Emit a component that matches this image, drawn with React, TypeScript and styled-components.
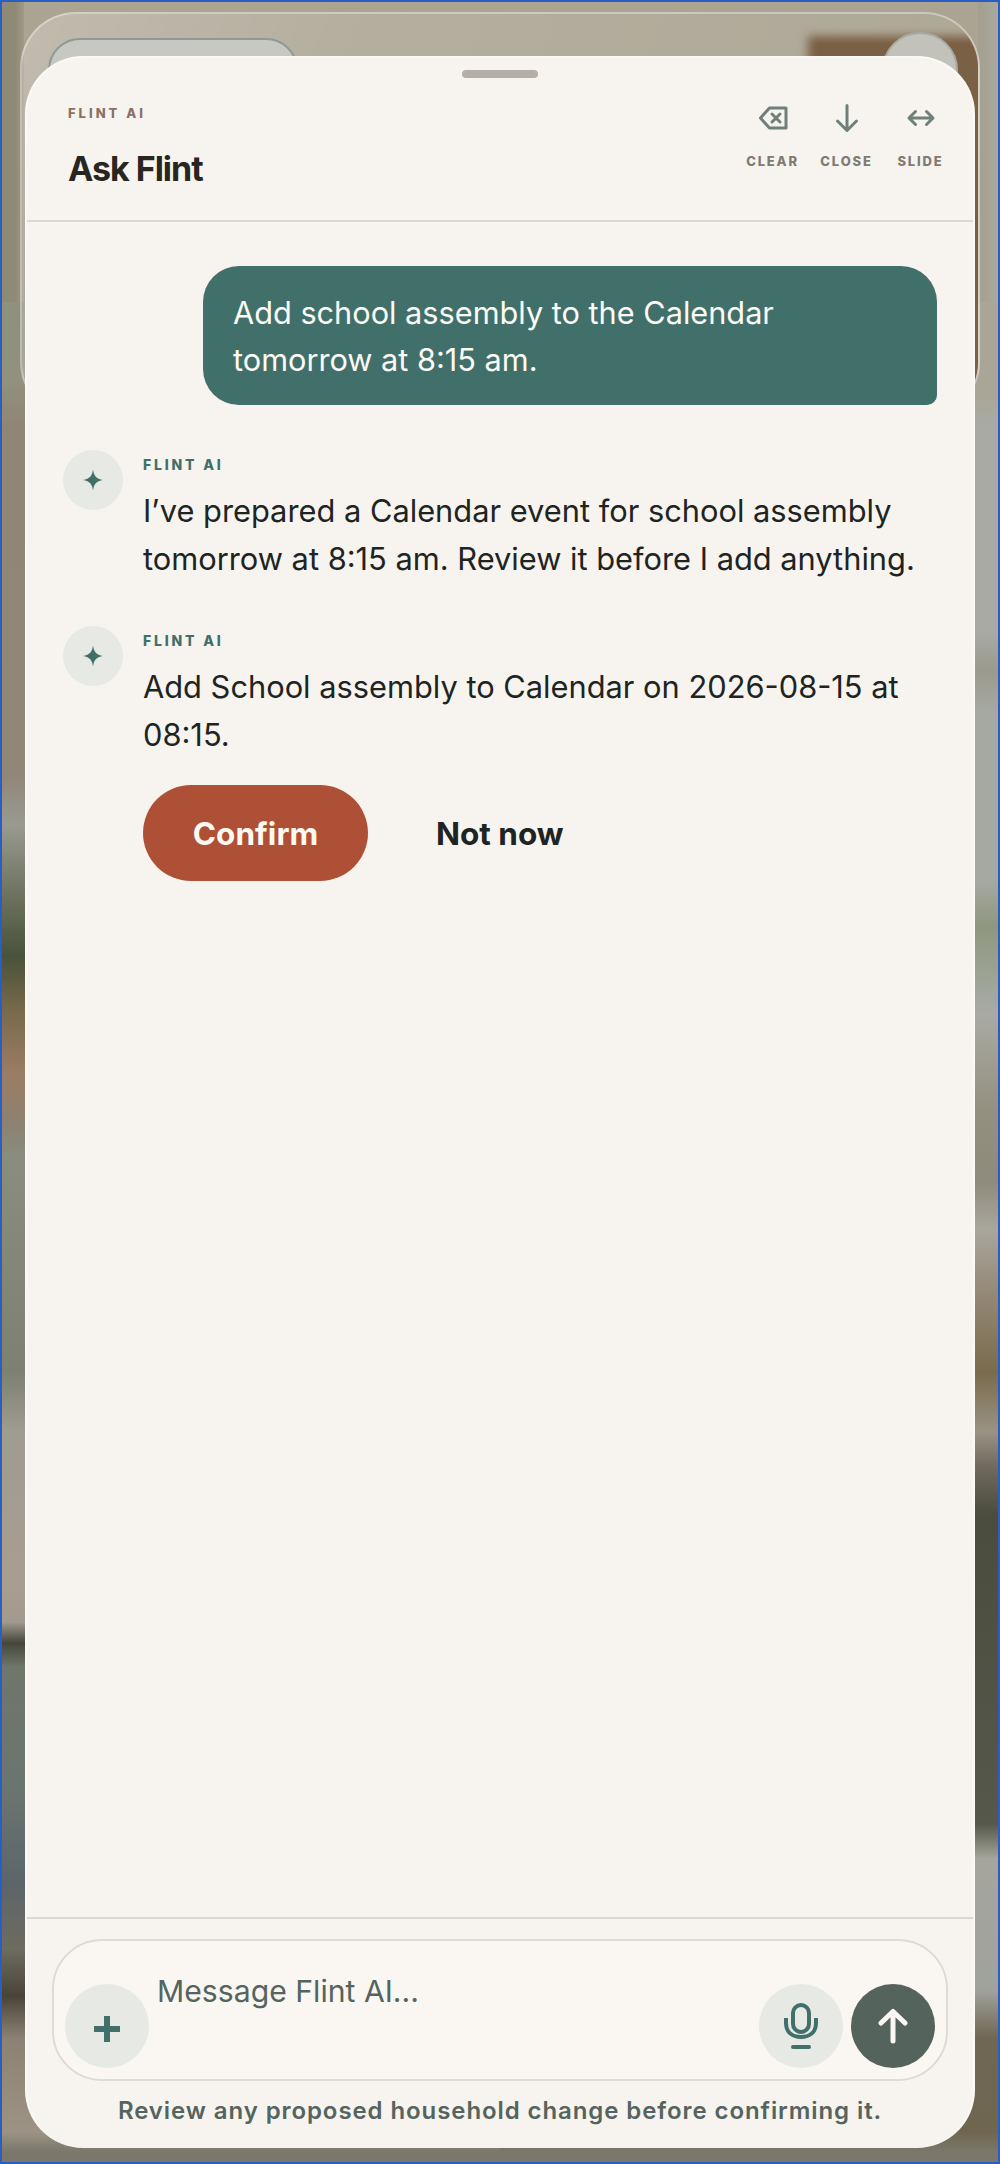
import React from "react";
import styled, { createGlobalStyle } from "styled-components";

const Global = createGlobalStyle`
  html, body { margin: 0; padding: 0; background: #2a5fc4; }
  body { font-family: Inter, "Liberation Sans", sans-serif; }
  * { box-sizing: border-box; }
`;

const Stage = styled.div`
  position: relative;
  width: 1000px;
  height: 2164px;
  overflow: hidden;
  border: 2px solid #2a5ec3;
  border-radius: 4px;
  background-color: #8f8a7c;
`;

const leftBands = `linear-gradient(180deg,
  #aba492 0, #aba492 70px, #90907f 300px, #92907f 380px, #8f8677 420px, #908779 775px,
  #9a9a90 823px, #7b7f6e 870px, #49523a 954px, #7a6a4c 1010px, #9b7d65 1073px, #8d8170 1120px,
  #8a8d7e 1156px, #7e8071 1370px, #a09c90 1430px, #a89d90 1584px, #a29a8e 1620px, #45463a 1641px, #6f766b 1665px,
  #6b7570 1786px, #5c656a 1881px, #6e6b5f 1947px, #4a4438 1994px, #8b8274 2036px, #9c9385 2130px, #7b776b 2150px, #7b776b 2164px)`;

const rightBands = `linear-gradient(180deg,
  #aba492 0, #aba492 70px, #a9a698 300px, #a9a698 395px, #a9aaa4 420px, #a9aaa4 630px, #9a9a8e 668px,
  #a6a8a2 710px, #a6a8a2 880px, #8f977f 924px, #98a08f 960px, #a9aaa5 1013px, #94907f 1108px, #8f8b7c 1180px,
  #a9a69e 1227px, #968a78 1287px, #7a6b4d 1370px, #9a9284 1430px, #6f6a5e 1465px, #4a4c3e 1513px, #55584a 1822px,
  #a5a59e 1857px, #a0a29c 1988px, #6f6753 2036px, #6f6650 2130px, #7b776b 2150px, #7b776b 2164px)`;

const Backdrop = styled.div`
  position: absolute;
  inset: 0;
  background-image:
    linear-gradient(90deg, #8f8a76, #8f8a76 60%, #a09a88),
    linear-gradient(270deg, #a9a9a0, #a49f8e),
    ${leftBands},
    ${rightBands};
  background-repeat: no-repeat;
  background-size: 22px 300px, 20px 300px, 50% 100%, 50% 100%;
  background-position: left top, right top, left top, right top;
`;

const BackFrame = styled.div`
  position: absolute;
  left: 18px;
  top: 10px;
  width: 960px;
  height: 406px;
  overflow: hidden;
  border: 2px solid rgba(255, 255, 255, 0.36);
  border-radius: 56px;
  background: linear-gradient(110deg, rgba(255, 255, 255, 0.26) 0, rgba(255, 255, 255, 0.12) 30%, rgba(255, 255, 255, 0.04) 100%);
`;

const Blob = styled.div`
  position: absolute;
  left: 786px;
  top: 22px;
  width: 200px;
  height: 400px;
  background: #7a6044;
  filter: blur(5px);
`;

const BackChip = styled.div`
  position: absolute;
  left: 26px;
  top: 24px;
  width: 250px;
  height: 90px;
  border: 2px solid #8f9a98;
  border-radius: 32px;
  background: #c6c8c1;
`;

const BackRound = styled.div`
  position: absolute;
  right: 20px;
  top: 18px;
  width: 76px;
  height: 76px;
  border: 2px solid #a9a9a2;
  border-radius: 50%;
  background: #c2c2bb;
`;

const Sheet = styled.main`
  position: absolute;
  left: 23px;
  top: 54px;
  width: 950px;
  height: 2092px;
  display: flex;
  flex-direction: column;
  border: 2px solid #fbf9f5;
  border-bottom-color: #f7f4ef;
  border-radius: 58px;
  background: #f7f4ef;
  overflow: hidden;
`;

const Grabber = styled.div`
  position: absolute;
  left: 435px;
  top: 12px;
  width: 76px;
  height: 8px;
  border-radius: 4px;
  background: #b5aea6;
`;

const Header = styled.header`
  height: 164px;
  flex: none;
  display: flex;
  justify-content: space-between;
  padding: 47px 25px 0 41px;
  border-bottom: 2px solid #dbd8d2;
`;

const TitleBlock = styled.div`
  display: flex;
  flex-direction: column;
  gap: 28px;
`;

const Eyebrow = styled.div`
  font-size: 13px;
  line-height: 16px;
  font-weight: 800;
  letter-spacing: 0.23em;
  color: #8a7263;
`;

const Title = styled.h1`
  margin: 0;
  font-size: 34px;
  line-height: 40px;
  font-weight: 700;
  letter-spacing: -0.03em;
  color: #282620;
`;

const Actions = styled.div`
  display: flex;
  gap: 19px;
  margin-top: -3px;
`;

const Action = styled.button`
  width: 55px;
  padding: 0;
  border: 0;
  background: none;
  display: flex;
  flex-direction: column;
  align-items: center;
  gap: 20px;
  color: #6f807a;
  font-family: inherit;
`;

const ActionIcon = styled.svg`
  display: block;
  width: 32px;
  height: 32px;
  fill: none;
  stroke: currentColor;
  stroke-width: 3;
  stroke-linecap: round;
  stroke-linejoin: round;
`;

const ActionLabel = styled.span`
  font-size: 13px;
  line-height: 14px;
  font-weight: 800;
  letter-spacing: 0.14em;
  color: #7f7b72;
  white-space: nowrap;
`;

const Thread = styled.section`
  flex: 1;
  display: flex;
  flex-direction: column;
  padding: 44px 36px 0;
`;

const UserBubble = styled.div`
  align-self: flex-end;
  width: 734px;
  height: 139px;
  padding: 23px 30px;
  border-radius: 36px 36px 10px 36px;
  background: #41706a;
  color: #fcfaf6;
  font-size: 30.7px;
  line-height: 47px;
`;

const AssistantRow = styled.article<{ $top: number }>`
  display: flex;
  gap: 20px;
  margin-top: ${(p) => p.$top}px;
`;

const Avatar = styled.div`
  flex: none;
  width: 60px;
  height: 60px;
  border-radius: 50%;
  background: #e7e9e5;
  display: flex;
  align-items: center;
  justify-content: center;
  color: #41706a;
`;

const Spark = styled.svg`
  display: block;
  width: 22px;
  height: 22px;
  fill: currentColor;
`;

const AssistantBody = styled.div`
  flex: 1;
`;

const AssistantName = styled.div`
  font-size: 14px;
  line-height: 20px;
  font-weight: 800;
  letter-spacing: 0.2em;
  color: #41706a;
  margin-top: 5px;
`;

const AssistantText = styled.p`
  margin: 12px 0 0;
  font-size: 30.8px;
  line-height: 48px;
  color: #1d2422;
`;

const Choices = styled.div`
  display: flex;
  align-items: center;
  gap: 68px;
  margin-top: 26px;
`;

const ConfirmButton = styled.button`
  width: 225px;
  height: 96px;
  border: 0;
  border-radius: 48px;
  background: #ae5036;
  color: #fcf8f2;
  font-family: inherit;
  font-size: 31.5px;
  font-weight: 700;
`;

const DismissButton = styled.button`
  padding: 0;
  border: 0;
  background: none;
  color: #1d2422;
  font-family: inherit;
  font-size: 31.5px;
  font-weight: 700;
`;

const Footer = styled.footer`
  flex: none;
  height: 229px;
  padding: 20px 25px 0;
  border-top: 2px solid #dbd8d2;
  display: flex;
  flex-direction: column;
  align-items: center;
`;

const Composer = styled.div`
  width: 896px;
  height: 142px;
  flex: none;
  padding: 0 11px 11px;
  display: flex;
  align-items: flex-end;
  border: 2px solid #dedad4;
  border-radius: 50px;
  background: #faf7f2;
`;

const Round = styled.button<{ $dark?: boolean }>`
  flex: none;
  width: 84px;
  height: 84px;
  padding: 0;
  border: 0;
  border-radius: 50%;
  display: flex;
  align-items: center;
  justify-content: center;
  background: ${(p) => (p.$dark ? "#55635d" : "#e7e9e5")};
  color: ${(p) => (p.$dark ? "#fbf8f3" : "#41706a")};
`;

const Placeholder = styled.div`
  flex: 1;
  align-self: flex-start;
  margin: 29px 0 0 8px;
  font-size: 30.2px;
  line-height: 42px;
  color: #55645f;
`;

const RoundIcon = styled.svg`
  display: block;
  width: 48px;
  height: 48px;
  fill: none;
  stroke: currentColor;
  stroke-linecap: round;
  stroke-linejoin: round;
`;

const Trailing = styled.div`
  display: flex;
  gap: 8px;
`;

const Hint = styled.div`
  margin-top: 15px;
  font-size: 24px;
  line-height: 30px;
  font-weight: 600;
  letter-spacing: 0.038em;
  color: #55645f;
  white-space: nowrap;
`;

const SparkGlyph = () => (
  <Spark viewBox="0 0 22 22">
    <path d="M11 0.5 C11.9 7 14.2 9.6 21 11 C14.2 12.4 11.9 15 11 21.5 C10.1 15 7.8 12.4 1 11 C7.8 9.6 10.1 7 11 0.5 Z" />
  </Spark>
);

export default function App() {
  return (
    <Stage>
      <Global />
      <Backdrop />
      <BackFrame>
        <Blob />
        <BackChip />
        <BackRound />
      </BackFrame>
      <Sheet>
        <Grabber />
        <Header>
          <TitleBlock>
            <Eyebrow>FLINT AI</Eyebrow>
            <Title>Ask Flint</Title>
          </TitleBlock>
          <Actions>
            <Action>
              <ActionIcon viewBox="0 0 32 32">
                <path d="M29 6H12.5L3.5 16L12.5 26H29Z" />
                <path d="M15 12L23 20M23 12L15 20" />
              </ActionIcon>
              <ActionLabel>CLEAR</ActionLabel>
            </Action>
            <Action>
              <ActionIcon viewBox="0 0 32 32">
                <path d="M16 3.5V28.5M6.5 19L16 28.5L25.5 19" />
              </ActionIcon>
              <ActionLabel>CLOSE</ActionLabel>
            </Action>
            <Action>
              <ActionIcon viewBox="0 0 32 32">
                <path d="M4 16H28M10.5 9.5L4 16L10.5 22.5M21.5 9.5L28 16L21.5 22.5" />
              </ActionIcon>
              <ActionLabel>SLIDE</ActionLabel>
            </Action>
          </Actions>
        </Header>
        <Thread>
          <UserBubble>Add school assembly to the Calendar tomorrow at 8:15 am.</UserBubble>
          <AssistantRow $top={45}>
            <Avatar>
              <SparkGlyph />
            </Avatar>
            <AssistantBody>
              <AssistantName>FLINT AI</AssistantName>
              <AssistantText>I’ve prepared a Calendar event for school assembly tomorrow at 8:15 am. Review it before I add anything.</AssistantText>
            </AssistantBody>
          </AssistantRow>
          <AssistantRow $top={43}>
            <Avatar>
              <SparkGlyph />
            </Avatar>
            <AssistantBody>
              <AssistantName>FLINT AI</AssistantName>
              <AssistantText>Add School assembly to Calendar on 2026-08-15 at 08:15.</AssistantText>
              <Choices>
                <ConfirmButton>Confirm</ConfirmButton>
                <DismissButton>Not now</DismissButton>
              </Choices>
            </AssistantBody>
          </AssistantRow>
        </Thread>
        <Footer>
          <Composer>
            <Round>
              <RoundIcon viewBox="0 0 48 48" strokeWidth={6} style={{ strokeLinecap: "butt" }}>
                <path d="M24 14V40M11 27H37" />
              </RoundIcon>
            </Round>
            <Placeholder>Message Flint AI...</Placeholder>
            <Trailing>
              <Round>
                <RoundIcon viewBox="0 0 48 48" strokeWidth={4}>
                  <rect x="16" y="3" width="16" height="27" rx="8" />
                  <path d="M9 16V21C9 30 15 35 24 35C33 35 39 30 39 21V16" strokeLinecap="butt" />
                  <path d="M16 45H32" />
                </RoundIcon>
              </Round>
              <Round $dark>
                <RoundIcon viewBox="0 0 48 48" strokeWidth={5}>
                  <path d="M24 39V10M12 21L24 9.5L36 21" />
                </RoundIcon>
              </Round>
            </Trailing>
          </Composer>
          <Hint>Review any proposed household change before confirming it.</Hint>
        </Footer>
      </Sheet>
    </Stage>
  );
}
